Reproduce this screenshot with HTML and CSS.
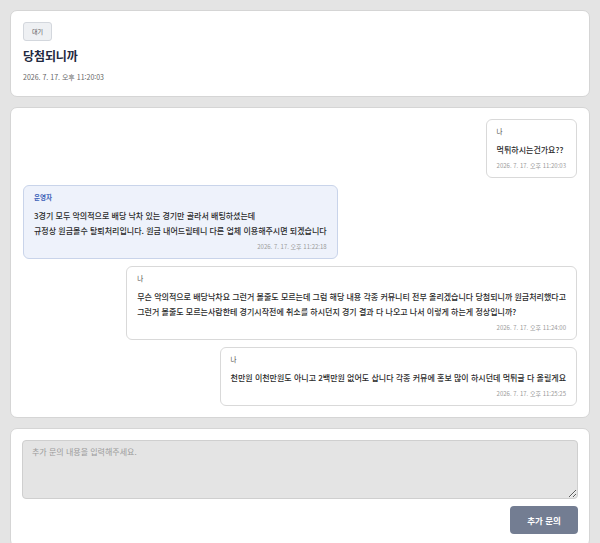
FILE: index.html
```html
<!DOCTYPE html>
<html lang="ko">
<head>
<meta charset="utf-8">
<title>문의 상세</title>
<link rel="stylesheet" href="styles.css">
</head>
<body>
  <main class="page">
    <section class="card header-card">
      <span class="badge">대기</span>
      <h1 class="title">당첨되니까</h1>
      <div class="created">2026. 7. 17. 오후 11:20:03</div>
    </section>

    <section class="card thread-card">
      <div class="thread">
        <div class="msg mine">
          <div class="msg-author">나</div>
          <div class="msg-body">먹튀하시는건가요??</div>
          <div class="msg-time">2026. 7. 17. 오후 11:20:03</div>
        </div>
        <div class="msg admin">
          <div class="msg-author">운영자</div>
          <div class="msg-body">3경기 모두 악의적으로 배당 낙차 있는 경기만 골라서 배팅하셨는데<br>규정상 원금몰수 탈퇴처리입니다. 원금 내어드릴테니 다른 업체 이용해주시면 되겠습니다</div>
          <div class="msg-time">2026. 7. 17. 오후 11:22:18</div>
        </div>
        <div class="msg mine">
          <div class="msg-author">나</div>
          <div class="msg-body">무슨 악의적으로 배당낙차요 그런거 볼줄도 모르는데 그럼 해당 내용 각종 커뮤니티 전부 올리겠습니다 당첨되니까 원금처리했다고<br>그런거 볼줄도 모르는사람한테 경기시작전에 취소를 하시던지 경기 결과 다 나오고 나서 이렇게 하는게 정상입니까?</div>
          <div class="msg-time">2026. 7. 17. 오후 11:24:00</div>
        </div>
        <div class="msg mine">
          <div class="msg-author">나</div>
          <div class="msg-body">천만원 이천만원도 아니고 2백만원 없어도 삽니다 각종 커뮤에 홍보 많이 하시던데 먹튀글 다 올릴게요</div>
          <div class="msg-time">2026. 7. 17. 오후 11:25:25</div>
        </div>
      </div>
    </section>

    <section class="card reply-card">
      <textarea class="reply-input" placeholder="추가 문의 내용을 입력해주세요."></textarea>
      <div class="reply-actions">
        <button class="reply-btn" type="button">추가 문의</button>
      </div>
    </section>
  </main>
</body>
</html>
```

FILE: styles.css
```css
html {
  overflow: hidden;
}

body {
  margin: 0;
  background: #e4e4e4;
  font-family: "Noto Sans CJK KR", "Noto Sans", sans-serif;
  color: #333;
}

.page {
  padding: 10px;
  display: flex;
  flex-direction: column;
  gap: 10px;
}

.card {
  background: #fff;
  border: 1px solid #d5d5d5;
  border-radius: 7px;
  padding: 12px;
}

/* header */
.header-card {
  display: flex;
  flex-direction: column;
  align-items: flex-start;
  padding: 11px 12px 14px;
}

.badge {
  display: flex;
  align-items: center;
  justify-content: center;
  width: 29px;
  height: 19px;
  box-sizing: border-box;
  background: #eef0f3;
  border: 1px solid #d3d7dd;
  border-radius: 3px;
  font-size: 6px;
  line-height: 1;
  color: #555;
}

.title {
  margin: 7px 0 0;
  font-size: 12px;
  line-height: 16px;
  font-weight: 700;
  letter-spacing: -0.1px;
  color: #1f2940;
}

.created {
  margin-top: 8px;
  font-size: 7px;
  line-height: 10px;
  color: #666;
}

/* thread */
.thread-card {
  padding: 11px 12px 11px;
}

.thread {
  display: flex;
  flex-direction: column;
  gap: 7px;
}

.msg {
  border: 1px solid #d9d9d9;
  border-radius: 6px;
  padding: 6px 10px 6px;
  background: #fff;
}

.msg.mine {
  align-self: flex-end;
}

.msg.admin {
  align-self: flex-start;
  background: #eef2fb;
  border-color: #c9d4ea;
}

.msg-author {
  font-size: 6.5px;
  line-height: 11px;
  color: #444;
}

.admin .msg-author {
  color: #3d63b8;
  font-weight: 600;
}

.msg-body {
  margin-top: 5px;
  font-size: 8px;
  line-height: 15px;
  font-weight: 500;
  color: #2a2a2a;
}

.msg-time {
  margin-top: 4px;
  font-size: 6px;
  line-height: 10px;
  color: #9a9a9a;
  text-align: right;
}

/* reply */
.reply-card {
  padding: 11px 11px 12px;
}

.reply-input {
  display: block;
  width: 100%;
  height: 59px;
  box-sizing: border-box;
  margin: 0;
  padding: 5px 9px;
  background: #e4e4e4;
  border: 1px solid #cfcfcf;
  border-radius: 4px;
  font-family: inherit;
  font-size: 8px;
  color: #333;
  resize: vertical;
}

.reply-input::placeholder {
  color: #9b9b9b;
}

.reply-actions {
  display: flex;
  justify-content: flex-end;
  margin-top: 7px;
}

.reply-btn {
  width: 68px;
  height: 28px;
  border: 0;
  border-radius: 4px;
  background: #737d92;
  color: #fff;
  font-family: inherit;
  font-size: 8.5px;
  font-weight: 700;
}
```
